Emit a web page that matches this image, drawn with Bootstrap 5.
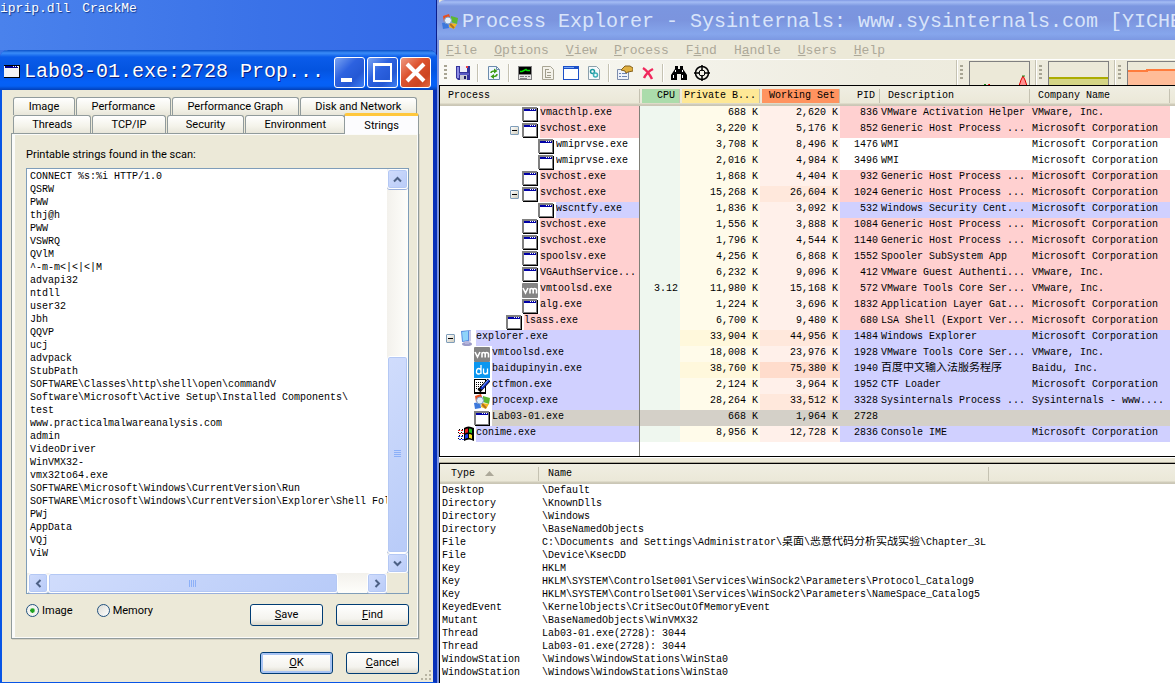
<!DOCTYPE html>
<html lang="en">
<head>
<meta charset="utf-8">
<meta name="viewport" content="width=device-width, initial-scale=1">
<title>Process Explorer</title>
<link href="https://cdn.jsdelivr.net/npm/bootstrap@5.3.0/dist/css/bootstrap.min.css" rel="stylesheet">
<style>
:root{--face:#ece9d8;--mono:"Liberation Mono","Noto Sans CJK SC",monospace;--ui:Roboto,"Noto Sans",sans-serif}
body{font:10px/13px var(--mono);color:#000;background:#3a72e8}
button{font:inherit;color:inherit;padding:0;border:0;background:none}
.desktop{display:grid;grid-template-columns:minmax(0,437fr) minmax(0,738fr);background:linear-gradient(20deg,#5a92f4 0,#4079ea 40%,#3468e2 100%)}
.labels{height:50px;color:#fff;font-size:13px;line-height:18px;text-shadow:1px 1px 1px #123a8c;gap:12px;background:linear-gradient(90deg,#4a82ec,#3a72e8 60%,#346ae8)}
.cjk{font-size:11px}
.k{text-decoration:underline}

/* properties dialog */
.dialog{background:var(--face);border:solid #0855e6;border-width:0 4px 1px 2px;border-right-color:#0831b8;font:11px/14px var(--ui);border-radius:8px 8px 0 0}
.caption{height:40px;font:20px/24px var(--mono);color:#fff;white-space:nowrap;overflow:hidden}
.dialog .caption{margin:0 -4px 0 -2px;padding:4px 6px 0 4px;background:linear-gradient(#0a50c8 0,#3a8cf8 3px,#0a5cea 7px,#0454e0 20px,#0560f8 32px,#0560f4 36px,#0340b8 100%);border-radius:8px 8px 0 0;gap:4px;text-shadow:1px 1px 0 #0a1e80}
.capbtn{width:31px;height:31px;border:1px solid #fff;border-radius:3px;background:linear-gradient(135deg,#7ba4f2,#2d62e0 40%,#2458d4 70%,#3f80f4)}
.capbtn.shut{background:linear-gradient(135deg,#ee9a82,#dd5430 40%,#cc4420 75%,#e06a44)}
.capbtn svg{display:block}
.dbody{padding:7px 14px 8px 9px}
.tabrow{gap:1px;margin-left:2px}
.tabrow button{flex:1 1 auto;height:18px;line-height:17px;border:1px solid #919b9c;border-bottom:0;border-radius:3px 3px 0 0;background:linear-gradient(#fff,#f4f3ea 60%,#e8e6da)}
.tabrow.first{margin-right:2px}
.tabrow .on{height:21px;margin:-2px 0 -1px -2px;background:#fcfcfe;border-top:3px solid #ffc73c;z-index:1;line-height:15px;padding:0 1px}
.sheet{border:1px solid #919b9c;box-shadow:inset 3px 1px 0 #fbfbf9,inset -1px -1px 0 #fbfbf9,1px 1px 0 #d6d2c2;padding:14px 9px 12px 14px}
.sheet p{margin-bottom:6px}
.listbox{border:1px solid #7f9db9;background:#fff;display:grid;grid-template-columns:minmax(0,1fr) 21px;grid-template-rows:1fr 20px}
.strings{font:10px/13px var(--mono);list-style:none;margin:0;padding:1px 0 11px 3px;white-space:pre;overflow:hidden}
.track{background:linear-gradient(90deg,#f3f1ec,#fefefb)}
.track.h{background:linear-gradient(#f3f1ec,#fefefb);padding-left:1px}
.track button{border:1px solid #fff;border-radius:3px;background:linear-gradient(135deg,#d0dcfc,#b8cbf8);box-shadow:inset 0 0 0 1px #b4c8f4,0 1px 0 #9ab0dc;flex:0 0 20px;display:flex;align-items:center;justify-content:center}
.track .thumb{flex:54 1 0}
.track .room{flex:46 1 0}
.track.h .thumb{flex-grow:91}
.track.h .room{flex-grow:9}
.xpbtn{width:73px;height:22px;border:1px solid #003c74;border-radius:3px;background:linear-gradient(#fff,#f4f3ee 70%,#dcd8cc)}
.xpbtn.def{box-shadow:inset 0 0 0 2px #a8c4f4}
.opt{appearance:none;width:13px;height:13px;margin:0;border:1px solid #21517f;border-radius:50%;background:linear-gradient(135deg,#dcdcd6,#fff)}
.opt:checked{background:radial-gradient(#21a121 0 2px,#66c466 2px,#f4f4f0 3px)}
.source{margin-top:10px}
.source label{gap:3px;margin-right:24px}
.acts{margin-top:13px}
.pair{gap:13px}
.sizer{position:absolute;right:1px;bottom:1px}

/* process explorer */
.explorer{background:var(--face);border-left:2px solid #7b93e0;box-shadow:-1px 0 0 #0a1e8c}
.explorer .caption{margin-left:-2px;padding:4px 0 0 5px;gap:4px;color:#d8e4fa;background:linear-gradient(#8099e4 0,#a4bcf4 2px,#7b96e0 6px,#7b94de 20px,#86a6ec 34px,#7c98e2 100%);border-radius:8px 0 0 0}
.menu{height:20px;gap:17px;padding:2px 8px 0 7px;font-size:13px;line-height:18px;border-bottom:1px solid #fff}
.menu a{color:#aca899;text-decoration:none}
.tools{height:25px;background:linear-gradient(90deg,#fafaf6,#eeece0 60%,var(--face))}
.tools button{width:23px;height:22px;display:flex;align-items:center;justify-content:center}
.rule{width:1px;height:18px;background:#c5c2b2;margin:0 4px 0 3px;box-shadow:1px 0 0 #fff}
.grip{width:3px;height:16px;margin:0 4px 0 5px;background:repeating-linear-gradient(#a8a594 0 2px,transparent 2px 4px)}
.graph{width:61px;height:24px;border:1px solid #808080;border-bottom:0;background:var(--face)}
.graph.part{width:48px;border-right:0}
.graph svg{display:block;width:100%;height:100%}
.band{border-left:1px solid #c5c2b2;box-shadow:inset 1px 0 0 #fff;padding-right:5px}
.band:last-child{padding-right:0}
.band .grip{margin:0 6px 0 3px}
.pane{background:#fff;border:solid #000;border-width:1px 0 1px 1px}
.grid-t{table-layout:fixed;width:100%;border-collapse:separate;border-spacing:0;white-space:nowrap}
.grid-t th,.grid-t td{padding:0;overflow:hidden}
.grid-t th{font-weight:400;height:20px;vertical-align:middle;background:linear-gradient(#f0eee2,#ebe8d8 85%,#d2cebc 90%,#c8c4b4)}
.grid-t th>span{display:block;border-right:1px solid #c5c2b2;line-height:14px;padding:0 2px 0 8px;height:14px}
.grid-t th:last-child>span{border:0}
.procs td{height:16px;line-height:13px;vertical-align:top}
.procs th:nth-child(n+2):nth-child(-n+5)>span{padding:0 2px;text-align:right}
.procs th:nth-child(n+2):nth-child(-n+4)>span{margin-left:2px}
.procs th:nth-child(n+2):nth-child(-n+5)>span{padding-right:4px}
.procs th:nth-child(3)>span{padding-left:1px;text-align:left}
.hc{background:#abdcab}.hp{background:#fee896}.hw{background:#ff935f}
.procs td:nth-child(n+2):nth-child(-n+5){text-align:right;padding-right:2px}
.procs td:nth-child(2){background:#eff7ef}
.procs td:nth-child(3){background:#fffbea}
.procs td:nth-child(4){background:#fff0ea}
.procs td:nth-child(6){padding-left:1px}
.procs td:nth-child(7){padding-left:2px}
.procs td:first-child{border-right:1px solid #808078}
.procs .svc td:nth-child(n+5):nth-child(-n+7),.svc .pname{background:#ffd0d0}
.procs .own td:nth-child(n+5):nth-child(-n+7),.own .pname{background:#d0d0ff}
.procs .sel td:nth-child(n+2):nth-child(-n+7),.sel .pname{background:#d4d0c8}
.procs td.m1:nth-child(4){background:#ffe8dc}.procs td.m2:nth-child(4){background:#ffdccc}
.procs td.m1:nth-child(3){background:#fff8dc}
.node{display:flex;height:16px;padding-left:6px}
.d1{padding-left:22px}.d3{padding-left:54px}.d4{padding-left:70px}.d5{padding-left:86px}
.node svg{flex:none;margin-right:2px}
.tw{flex:0 0 9px;height:9px;margin:4px 3px 0 0;border:1px solid #7f9db9;border-radius:1px;background:linear-gradient(#000,#000) center/5px 1px no-repeat,linear-gradient(135deg,#fff,#d0ccbc)}
.stub{width:12px;flex:none}
.pname{flex:1;overflow:hidden}
.procs .rest td{height:14px;background:#fff}
.handles td{height:13px;line-height:13px;padding-left:2px}
.handles td+td{padding-left:3px}
.handles th>span{padding-left:9px}
.handles th:first-child>span{padding-left:11px}
.split{height:6px;border-top:1px solid #fff;border-bottom:1px solid #aca899}
</style>
</head>
<body>
<svg width="0" height="0" class="position-absolute" aria-hidden="true">
<symbol id="app" viewBox="0 0 16 16"><path fill="#000" d="M1 2h15v14H1z"/><path fill="#808080" d="M0 1h15v14H0z"/><path fill="#fff" d="M2 3h12v11H2z"/><path fill="#0000a8" d="M2 3h12v2H2z"/><path fill="#fff" d="M8 3h1v1H8zM10 3h1v1h-1zM12 3h1v1h-1z"/></symbol>
<symbol id="vm" viewBox="0 0 16 16"><rect width="16" height="15" y="1" rx="1" fill="#848484"/><path d="M1 6l2.500 5L6 6M8 11.500V6.500M8 8q0-1.500 1.500-1.500T11.200 8v3.500M11.200 8q0-1.500 1.500-1.500T14.500 8v3.500" fill="none" stroke="#fff" stroke-width="1.600"/></symbol>
<symbol id="du" viewBox="0 0 16 16"><rect width="16" height="16" fill="#0b97f0"/><path d="M7 3v9M7 8.500Q6.500 6.500 4.700 6.500T2.500 9.200t2.200 2.800T7 9.500M9.500 6.500V10q0 2 1.800 2T13.500 10V6.500V12.300" fill="none" stroke="#fff" stroke-width="1.300"/></symbol>
<symbol id="pen" viewBox="0 0 16 16"><path fill="#000" d="M0 1h12v15H0z"/><path fill="#fff" d="M1 2h10v12H1z"/><path stroke="#000" stroke-dasharray="1 1" d="M2 4.500h8M2 6.500h7M2 8.500h5M2 10.500h4"/><path stroke="#000" stroke-width="4" d="M5 13L15 2"/><path stroke="#1230d0" stroke-width="2.500" d="M7 11L15 2"/><path stroke="#8cb8ff" d="M8 9l6-7"/></symbol>
<symbol id="px" viewBox="0 0 16 16"><path fill="#e8501e" d="M1 2l6-2 2 6-7 2z"/><path fill="#5cb832" d="M9 2l7 2-1 6-6-2z"/><path fill="#f4b81c" d="M8 9l7 1-3 5-5-2z"/><path fill="#3c78dc" d="M0 9l6-1 1 6-6 1z"/><circle cx="6" cy="6.500" r="3.500" fill="#e2f0fc" stroke="#7c9cc8"/><path stroke="#b07020" stroke-width="2" d="M8 10l4 4"/></symbol>
<symbol id="pc" viewBox="0 0 16 16"><g transform="translate(-1 0)"><path fill="#5a8ee0" d="M4 1l10-1v11l-9 1z"/><path fill="#8fd4fa" d="M5 2l6-1v9l-5 1z"/><path fill="#c9c9e8" d="M12 1l2-1v11l-2 1z"/><ellipse cx="10" cy="14" rx="5" ry="2" fill="#9c9cc8"/><path fill="#b4b4dc" d="M8 11h4v3H8z"/></g></symbol>
<symbol id="win" viewBox="0 0 16 16"><path fill="#000" d="M6 2q4-3 10 0v13q-5-3-10 0z"/><path fill="#e82020" d="M7 3.500q1.500-1 3-1v4q-2 0-3 1z"/><path fill="#20c020" d="M11 2.500q2 0 3 1v4q-1-1-3-1z"/><path fill="#2040e8" d="M7 9q1-1 3-1v4q-2 0-3 1z"/><path fill="#f8e020" d="M11 8q2 0 3 1v4q-1-1-3-1z"/><path stroke="#e82020" stroke-dasharray="2 1" d="M0 4.500h5M1 7.500h5"/><path stroke="#2040e8" stroke-dasharray="2 1" d="M0 10.500h5M1 13.500h5"/><path stroke="#000" stroke-dasharray="1 2" d="M1 3.500h5M0 6.500h5M1 9.500h5M0 12.500h5"/></symbol>
</svg>

<main class="desktop min-vh-100">
<div class="d-flex flex-column">
  <div class="labels d-flex"><span>iprip.dll</span><span>CrackMe</span></div>
  <section class="dialog flex-grow-1 d-flex flex-column position-relative">
    <header class="caption d-flex align-items-center">
      <svg width="16" height="16"><path fill="#000" d="M0 1h16v13H0z"/><path fill="#f4f4f4" d="M0 2h15v11H0z"/><path fill="#000090" d="M1 2h13v2H1z"/><path fill="#fff" d="M9 2h1v1H9zM11 2h1v1h-1zM13 2h1v1h-1z"/></svg>
      <span class="flex-grow-1">Lab03-01.exe:2728 Prop...</span>
      <div class="d-flex" style="gap:2px">
        <button class="capbtn" aria-label="Minimize"><svg width="29" height="29"><path fill="#fff" d="M6 20h11v4H6z"/></svg></button>
        <button class="capbtn" aria-label="Maximize"><svg width="29" height="29"><path fill="none" stroke="#fff" stroke-width="2" d="M6 7h17v16H6z"/><path fill="#fff" d="M5 5h19v3H5z"/></svg></button>
        <button class="capbtn shut" aria-label="Close"><svg width="29" height="29"><path stroke="#fff" stroke-width="4" d="M6 6l17 17M23 6L6 23"/></svg></button>
      </div>
    </header>
    <div class="dbody flex-grow-1 d-flex flex-column">
      <div class="tabrow first d-flex"><button>Image</button><button>Performance</button><button>Performance Graph</button><button>Disk and Network</button></div>
      <div class="tabrow d-flex"><button>Threads</button><button>TCP/IP</button><button>Security</button><button>Environment</button><button class="on">Strings</button></div>
      <div class="sheet flex-grow-1 d-flex flex-column">
        <p>Printable strings found in the scan:</p>
        <div class="listbox flex-grow-1">
          <ul class="strings"><li>CONNECT %s:%i HTTP/1.0</li><li>QSRW</li><li>PWW</li><li>thj@h</li><li>PWW</li><li>VSWRQ</li><li>QVlM</li><li>^-m-m&lt;|&lt;|&lt;|M</li><li>advapi32</li><li>ntdll</li><li>user32</li><li>Jbh</li><li>QQVP</li><li>ucj</li><li>advpack</li><li>StubPath</li><li>SOFTWARE\Classes\http\shell\open\commandV</li><li>Software\Microsoft\Active Setup\Installed Components\</li><li>test</li><li>www.practicalmalwareanalysis.com</li><li>admin</li><li>VideoDriver</li><li>WinVMX32-</li><li>vmx32to64.exe</li><li>SOFTWARE\Microsoft\Windows\CurrentVersion\Run</li><li>SOFTWARE\Microsoft\Windows\CurrentVersion\Explorer\Shell Fol</li><li>PWj</li><li>AppData</li><li>VQj</li><li>ViW</li></ul>
          <div class="track d-flex flex-column">
            <button aria-label="Scroll up"><svg width="9" height="7"><path fill="none" stroke="#4d6185" stroke-width="2" d="M1 5.500l3.500-3.500L8 5.500"/></svg></button>
            <span class="room"></span>
            <button class="thumb" aria-label="Vertical position"><svg width="8" height="8"><path stroke="#8cb0f8" d="M0 .5h7M0 2.500h7M0 4.500h7M0 6.500h7"/></svg></button>
            <button aria-label="Scroll down"><svg width="9" height="7"><path fill="none" stroke="#4d6185" stroke-width="2" d="M1 1.500L4.500 5 8 1.500"/></svg></button>
          </div>
          <div class="track h d-flex">
            <button aria-label="Scroll left"><svg width="7" height="9"><path fill="none" stroke="#4d6185" stroke-width="2" d="M5.500 1L2 4.500 5.500 8"/></svg></button>
            <button class="thumb" aria-label="Horizontal position"><svg width="8" height="7"><path stroke="#8cb0f8" d="M.5 0v7M2.500 0v7M4.500 0v7M6.500 0v7"/></svg></button>
            <span class="room"></span>
            <button aria-label="Scroll right"><svg width="7" height="9"><path fill="none" stroke="#4d6185" stroke-width="2" d="M1.500 1L5 4.500 1.500 8"/></svg></button>
          </div>
          <div style="background:var(--face)"></div>
        </div>
        <div class="source d-flex">
          <label class="d-flex"><input class="opt" type="radio" name="src" checked>Image</label>
          <label class="d-flex"><input class="opt" type="radio" name="src">Memory</label>
          <div class="pair ms-auto d-flex"><button class="xpbtn"><span class="k">S</span>ave</button><button class="xpbtn"><span class="k">F</span>ind</button></div>
        </div>
      </div>
      <div class="acts pair d-flex justify-content-end"><button class="xpbtn def"><span class="k">O</span>K</button><button class="xpbtn"><span class="k">C</span>ancel</button></div>
    </div>
    <svg class="sizer" width="12" height="12"><path fill="#b8b4a2" d="M9 1h2v2H9zM9 5h2v2H9zM5 5h2v2H5zM9 9h2v2H9zM5 9h2v2H5zM1 9h2v2H1z"/></svg>
  </section>
</div>

<section class="explorer d-flex flex-column">
  <header class="caption d-flex align-items-center"><svg width="16" height="16" class="flex-shrink-0"><use href="#px"/></svg><span>Process Explorer - Sysinternals: www.sysinternals.com [YICHE</span></header>
  <nav class="menu d-flex">
    <a href="#"><span class="k">F</span>ile</a><a href="#"><span class="k">O</span>ptions</a><a href="#"><span class="k">V</span>iew</a><a href="#"><span class="k">P</span>rocess</a><a href="#">F<span class="k">i</span>nd</a><a href="#">H<span class="k">a</span>ndle</a><a href="#"><span class="k">U</span>sers</a><a href="#"><span class="k">H</span>elp</a>
  </nav>
  <div class="tools d-flex align-items-center">
    <span class="grip"></span>
    <button aria-label="Save"><svg width="16" height="16"><path fill="#34349c" d="M1 1h14v14H3l-2-2z"/><path fill="#8c8ce4" d="M2 2h2v11H2z"/><path fill="#f0f0fa" d="M5 1h7v6H5z"/><path fill="#ec4040" d="M11 1h2v2h-2z"/><path fill="#5858c4" d="M4 8h10v2H4z"/><path fill="#c8c8d4" d="M5 10h7v5H5z"/><path fill="#1c1c60" d="M9 11h2v3H9z"/></svg></button>
    <span class="rule"></span>
    <button aria-label="Refresh"><svg width="16" height="16"><path fill="#eef6ff" stroke="#6c8cac" d="M2.500 1.500h8l3 3v10h-11z"/><path fill="none" stroke="#6c8cac" d="M10.500 1.500v3h3"/><path fill="none" stroke="#3c9c14" stroke-width="1.500" d="M5 8q0-2 4-2M11 9q0 2.500-4 2.500"/><path fill="#3c9c14" d="M8 3.500l3.500 2.500L8 8.500zM8 9l-3.500 2.500L8 14z"/></svg></button>
    <span class="rule"></span>
    <button aria-label="System information"><svg width="16" height="16"><path fill="#808080" d="M1 1h14v14H1z"/><path fill="#000" d="M2 2h12v7H2z"/><path fill="none" stroke="#00e000" stroke-width="1.500" d="M3 6.500h2l2-1 2-1 1 1h3"/><path fill="#e4e4e4" d="M2 10h12v4H2z"/><path fill="#808080" d="M3 11h4v1H3zM8 11h2v1H8zM11 11h2v1h-2zM3 13h7v1H3z"/></svg></button>
    <button aria-label="Process tree"><svg width="16" height="16"><path fill="#f4f2ea" stroke="#a8a594" d="M2.500 1.500h8l3 3v10h-11z"/><path fill="none" stroke="#a09d8c" d="M5.500 4v8M5 4.500h4M7 7.500h4M7 10.500h4M5 12.500h6"/></svg></button>
    <button aria-label="Lower pane"><svg width="16" height="16"><path fill="#1c50c8" d="M0 1h16v14H0z"/><path fill="#fff" d="M1 4h14v10H1z"/><path fill="#78a8f8" d="M1 2h10v1H1z"/></svg></button>
    <button aria-label="View handles"><svg width="16" height="16"><path fill="#f6fafc" stroke="#8ca0ac" d="M2.500 1.500h8l3 3v10h-11z"/><circle cx="6.500" cy="6.500" r="2" fill="none" stroke="#1c98a0" stroke-width="1.500"/><circle cx="9.500" cy="10" r="2" fill="none" stroke="#3cb0b8" stroke-width="1.500"/></svg></button>
    <span class="rule"></span>
    <button aria-label="Properties"><svg width="16" height="16"><path fill="#eef2fa" stroke="#7c8cac" d="M.5 4.500h11v10H.5z"/><path fill="#6c84b4" d="M2 8h2v1H2zM5 8h5v1H5zM2 11h2v1H2zM5 11h5v1H5z"/><path fill="#e0b040" stroke="#84601c" d="M4 5l4-4h5l3 2v3l-5 1-2 1-1-2z"/></svg></button>
    <button aria-label="Kill process"><svg width="16" height="16"><path fill="none" stroke="#f0285c" stroke-width="2.500" d="M3 3q5 3 9 11M13 4q-6 3-9 9"/></svg></button>
    <span class="rule"></span>
    <button aria-label="Find"><svg width="16" height="16"><path d="M4 1h3v3h2V1h3v3l4 6v5h-6V9H6v6H0v-5l4-6z"/><path fill="#fff" d="M4 5h1v2H4zM11 5h1v2h-1zM2 10h1v3H2zM11 10h1v3h-1z"/></svg></button>
    <button aria-label="Find window's process"><svg width="16" height="16"><g fill="none" stroke="#000"><circle cx="8" cy="8" r="6.500" stroke-width="1.500"/><circle cx="8" cy="8" r="3"/><path stroke-width="1.500" d="M8 0v6M8 10v6M0 8h6M10 8h6"/></g></svg></button>
    <div class="ms-auto d-flex align-self-stretch">
      <div class="band d-flex align-items-center"><span class="grip"></span><div class="graph"><svg><path fill="#ff9090" stroke="#e00000" d="M49 24l2-6 2-4 2 4 2 6M18 24l1-2 2 2M27 24l1-1 1 1"/><path stroke="#1c8c1c" d="M52 14h3M14 22.500h2"/></svg></div></div>
      <div class="band d-flex align-items-center"><span class="grip"></span><div class="graph"><svg><path fill="#d4d484" d="M0 16h60v8H0z"/><path fill="#acac00" d="M0 15h60v2H0z"/></svg></div></div>
      <div class="band d-flex align-items-center"><span class="grip"></span><div class="graph part"><svg><path fill="#ffbc98" d="M0 9h20V8h40v16H0z"/><path fill="none" stroke="#ff7c3c" stroke-width="2" d="M0 9h19V8h40"/></svg></div></div>
    </div>
  </div>

  <div class="pane overflow-hidden">
  <table class="grid-t procs">
    <colgroup><col style="width:200px"><col style="width:40px"><col style="width:80px"><col style="width:80px"><col style="width:40px"><col style="width:150px"><col style="width:140px"><col></colgroup>
    <thead><tr><th><span>Process</span></th><th><span class="hc">CPU</span></th><th><span class="hp">Private B...</span></th><th><span class="hw">Working Set</span></th><th><span>PID</span></th><th><span>Description</span></th><th><span>Company Name</span></th><th><span></span></th></tr></thead>
    <tbody>
    <tr class="svc"><td><div class="node d4"><i class="stub"></i><svg width="16" height="16"><use href="#app"/></svg><span class="pname">vmacthlp.exe</span></div></td><td></td><td>688 K</td><td>2,620 K</td><td>836</td><td>VMware Activation Helper</td><td>VMware, Inc.</td><td></td></tr>
    <tr class="svc"><td><div class="node d4"><button class="tw" aria-label="Collapse"></button><svg width="16" height="16"><use href="#app"/></svg><span class="pname">svchost.exe</span></div></td><td></td><td>3,220 K</td><td>5,176 K</td><td>852</td><td>Generic Host Process ...</td><td>Microsoft Corporation</td><td></td></tr>
    <tr><td><div class="node d5"><i class="stub"></i><svg width="16" height="16"><use href="#app"/></svg><span class="pname">wmiprvse.exe</span></div></td><td></td><td>3,708 K</td><td>8,496 K</td><td>1476</td><td>WMI</td><td>Microsoft Corporation</td><td></td></tr>
    <tr><td><div class="node d5"><i class="stub"></i><svg width="16" height="16"><use href="#app"/></svg><span class="pname">wmiprvse.exe</span></div></td><td></td><td>2,016 K</td><td>4,984 K</td><td>3496</td><td>WMI</td><td>Microsoft Corporation</td><td></td></tr>
    <tr class="svc"><td><div class="node d4"><i class="stub"></i><svg width="16" height="16"><use href="#app"/></svg><span class="pname">svchost.exe</span></div></td><td></td><td>1,868 K</td><td>4,404 K</td><td>932</td><td>Generic Host Process ...</td><td>Microsoft Corporation</td><td></td></tr>
    <tr class="svc"><td><div class="node d4"><button class="tw" aria-label="Collapse"></button><svg width="16" height="16"><use href="#app"/></svg><span class="pname">svchost.exe</span></div></td><td></td><td>15,268 K</td><td class="m1">26,604 K</td><td>1024</td><td>Generic Host Process ...</td><td>Microsoft Corporation</td><td></td></tr>
    <tr class="own"><td><div class="node d5"><i class="stub"></i><svg width="16" height="16"><use href="#app"/></svg><span class="pname">wscntfy.exe</span></div></td><td></td><td>1,836 K</td><td>3,092 K</td><td>532</td><td>Windows Security Cent...</td><td>Microsoft Corporation</td><td></td></tr>
    <tr class="svc"><td><div class="node d4"><i class="stub"></i><svg width="16" height="16"><use href="#app"/></svg><span class="pname">svchost.exe</span></div></td><td></td><td>1,556 K</td><td>3,888 K</td><td>1084</td><td>Generic Host Process ...</td><td>Microsoft Corporation</td><td></td></tr>
    <tr class="svc"><td><div class="node d4"><i class="stub"></i><svg width="16" height="16"><use href="#app"/></svg><span class="pname">svchost.exe</span></div></td><td></td><td>1,796 K</td><td>4,544 K</td><td>1140</td><td>Generic Host Process ...</td><td>Microsoft Corporation</td><td></td></tr>
    <tr class="svc"><td><div class="node d4"><i class="stub"></i><svg width="16" height="16"><use href="#app"/></svg><span class="pname">spoolsv.exe</span></div></td><td></td><td>4,256 K</td><td>6,868 K</td><td>1552</td><td>Spooler SubSystem App</td><td>Microsoft Corporation</td><td></td></tr>
    <tr class="svc"><td><div class="node d4"><i class="stub"></i><svg width="16" height="16"><use href="#app"/></svg><span class="pname">VGAuthService...</span></div></td><td></td><td>6,232 K</td><td>9,096 K</td><td>412</td><td>VMware Guest Authenti...</td><td>VMware, Inc.</td><td></td></tr>
    <tr class="svc"><td><div class="node d4"><i class="stub"></i><svg width="16" height="16"><use href="#vm"/></svg><span class="pname">vmtoolsd.exe</span></div></td><td>3.12</td><td>11,980 K</td><td>15,168 K</td><td>572</td><td>VMware Tools Core Ser...</td><td>VMware, Inc.</td><td></td></tr>
    <tr class="svc"><td><div class="node d4"><i class="stub"></i><svg width="16" height="16"><use href="#app"/></svg><span class="pname">alg.exe</span></div></td><td></td><td>1,224 K</td><td>3,696 K</td><td>1832</td><td>Application Layer Gat...</td><td>Microsoft Corporation</td><td></td></tr>
    <tr class="svc"><td><div class="node d3"><i class="stub"></i><svg width="16" height="16"><use href="#app"/></svg><span class="pname">lsass.exe</span></div></td><td></td><td>6,700 K</td><td>9,480 K</td><td>680</td><td>LSA Shell (Export Ver...</td><td>Microsoft Corporation</td><td></td></tr>
    <tr class="own"><td><div class="node"><button class="tw" aria-label="Collapse"></button><svg width="16" height="16"><use href="#pc"/></svg><span class="pname">explorer.exe</span></div></td><td></td><td class="m1">33,904 K</td><td class="m1">44,956 K</td><td>1484</td><td>Windows Explorer</td><td>Microsoft Corporation</td><td></td></tr>
    <tr class="own"><td><div class="node d1"><i class="stub"></i><svg width="16" height="16"><use href="#vm"/></svg><span class="pname">vmtoolsd.exe</span></div></td><td></td><td>18,008 K</td><td>23,976 K</td><td>1928</td><td>VMware Tools Core Ser...</td><td>VMware, Inc.</td><td></td></tr>
    <tr class="own"><td><div class="node d1"><i class="stub"></i><svg width="16" height="16"><use href="#du"/></svg><span class="pname">baidupinyin.exe</span></div></td><td></td><td class="m1">38,760 K</td><td class="m2">75,380 K</td><td>1940</td><td class="cjk">百度中文输入法服务程序</td><td>Baidu, Inc.</td><td></td></tr>
    <tr class="own"><td><div class="node d1"><i class="stub"></i><svg width="16" height="16"><use href="#pen"/></svg><span class="pname">ctfmon.exe</span></div></td><td></td><td>2,124 K</td><td>3,964 K</td><td>1952</td><td>CTF Loader</td><td>Microsoft Corporation</td><td></td></tr>
    <tr class="own"><td><div class="node d1"><i class="stub"></i><svg width="16" height="16"><use href="#px"/></svg><span class="pname">procexp.exe</span></div></td><td></td><td>28,264 K</td><td class="m1">33,512 K</td><td>3328</td><td>Sysinternals Process ...</td><td>Sysinternals - www....</td><td></td></tr>
    <tr class="sel"><td><div class="node d1"><i class="stub"></i><svg width="16" height="16"><use href="#app"/></svg><span class="pname">Lab03-01.exe</span></div></td><td></td><td>668 K</td><td>1,964 K</td><td>2728</td><td></td><td></td><td></td></tr>
    <tr class="own"><td><div class="node"><i class="stub"></i><svg width="16" height="16"><use href="#win"/></svg><span class="pname">conime.exe</span></div></td><td></td><td>8,956 K</td><td>12,728 K</td><td>2836</td><td>Console IME</td><td>Microsoft Corporation</td><td></td></tr>
    <tr class="rest"><td></td><td></td><td></td><td></td><td></td><td></td><td></td><td></td></tr>
    </tbody>
  </table>
  </div>
  <div class="split"></div>
  <div class="pane flex-grow-1 border-bottom-0">
  <table class="grid-t handles">
    <colgroup><col style="width:99px"><col style="width:450px"><col></colgroup>
    <thead><tr><th><span>Type <svg width="9" height="5" class="align-middle ms-1"><path fill="#aca899" d="M0 5l4.500-5L9 5z"/></svg></span></th><th><span>Name</span></th><th><span></span></th></tr></thead>
    <tbody>
    <tr><td>Desktop</td><td>\Default</td><td></td></tr>
    <tr><td>Directory</td><td>\KnownDlls</td><td></td></tr>
    <tr><td>Directory</td><td>\Windows</td><td></td></tr>
    <tr><td>Directory</td><td>\BaseNamedObjects</td><td></td></tr>
    <tr><td>File</td><td>C:\Documents and Settings\Administrator\<span class="cjk">桌面</span>\<span class="cjk">恶意代码分析实战实验</span>\Chapter_3L</td><td></td></tr>
    <tr><td>File</td><td>\Device\KsecDD</td><td></td></tr>
    <tr><td>Key</td><td>HKLM</td><td></td></tr>
    <tr><td>Key</td><td>HKLM\SYSTEM\ControlSet001\Services\WinSock2\Parameters\Protocol_Catalog9</td><td></td></tr>
    <tr><td>Key</td><td>HKLM\SYSTEM\ControlSet001\Services\WinSock2\Parameters\NameSpace_Catalog5</td><td></td></tr>
    <tr><td>KeyedEvent</td><td>\KernelObjects\CritSecOutOfMemoryEvent</td><td></td></tr>
    <tr><td>Mutant</td><td>\BaseNamedObjects\WinVMX32</td><td></td></tr>
    <tr><td>Thread</td><td>Lab03-01.exe(2728): 3044</td><td></td></tr>
    <tr><td>Thread</td><td>Lab03-01.exe(2728): 3044</td><td></td></tr>
    <tr><td>WindowStation</td><td>\Windows\WindowStations\WinSta0</td><td></td></tr>
    <tr><td>WindowStation</td><td>\Windows\WindowStations\WinSta0</td><td></td></tr>
    </tbody>
  </table>
  </div>
</section>
</main>
<script src="https://cdn.jsdelivr.net/npm/bootstrap@5.3.0/dist/js/bootstrap.bundle.min.js"></script>
</body>
</html>
